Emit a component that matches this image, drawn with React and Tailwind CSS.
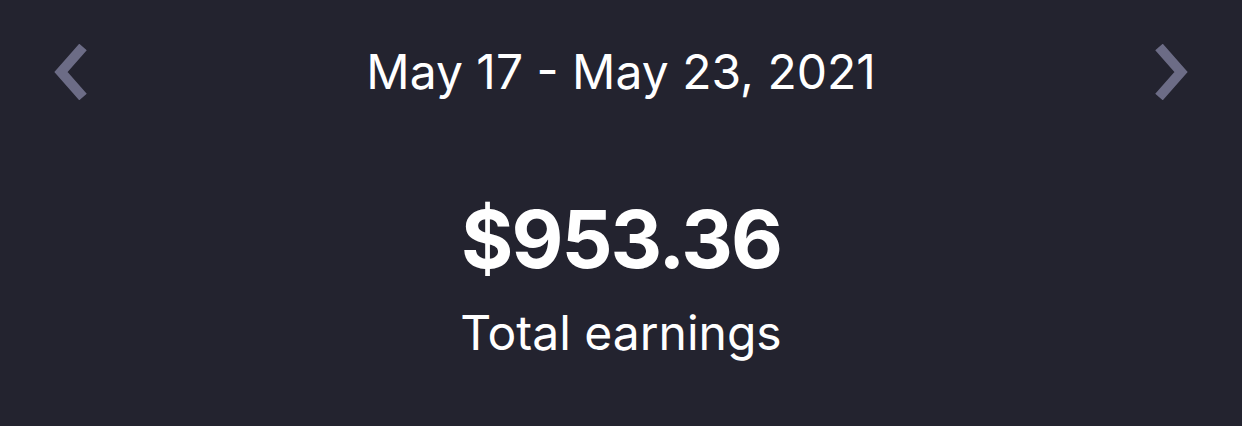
export default function App() {
  return (
    <div
      className="w-[1242px] h-[426px] bg-[#23232f] text-white flex flex-col"
      style={{ fontFamily: "Inter, 'Noto Sans', sans-serif" }}
    >
      <div className="flex items-center justify-between px-[52px] pt-[44px] h-[100px]">
        <button className="w-[40px] h-[56px] flex items-center justify-center">
          <svg width="40" height="56" viewBox="0 0 40 56" fill="none">
            <polyline points="31,3 9,28 31,53" stroke="#6c6c86" strokeWidth="10" strokeLinejoin="miter" />
          </svg>
        </button>
        <div className="text-[48px] leading-none font-normal">May 17 - May 23, 2021</div>
        <button className="w-[40px] h-[56px] flex items-center justify-center">
          <svg width="40" height="56" viewBox="0 0 40 56" fill="none">
            <polyline points="9,3 31,28 9,53" stroke="#6c6c86" strokeWidth="10" strokeLinejoin="miter" />
          </svg>
        </button>
      </div>
      <div className="flex flex-col items-center mt-[99px]">
        <div className="text-[80px] leading-none font-bold tracking-[-0.025em]">$953.36</div>
        <div className="text-[48px] leading-none mt-[30px]">Total earnings</div>
      </div>
    </div>
  );
}
